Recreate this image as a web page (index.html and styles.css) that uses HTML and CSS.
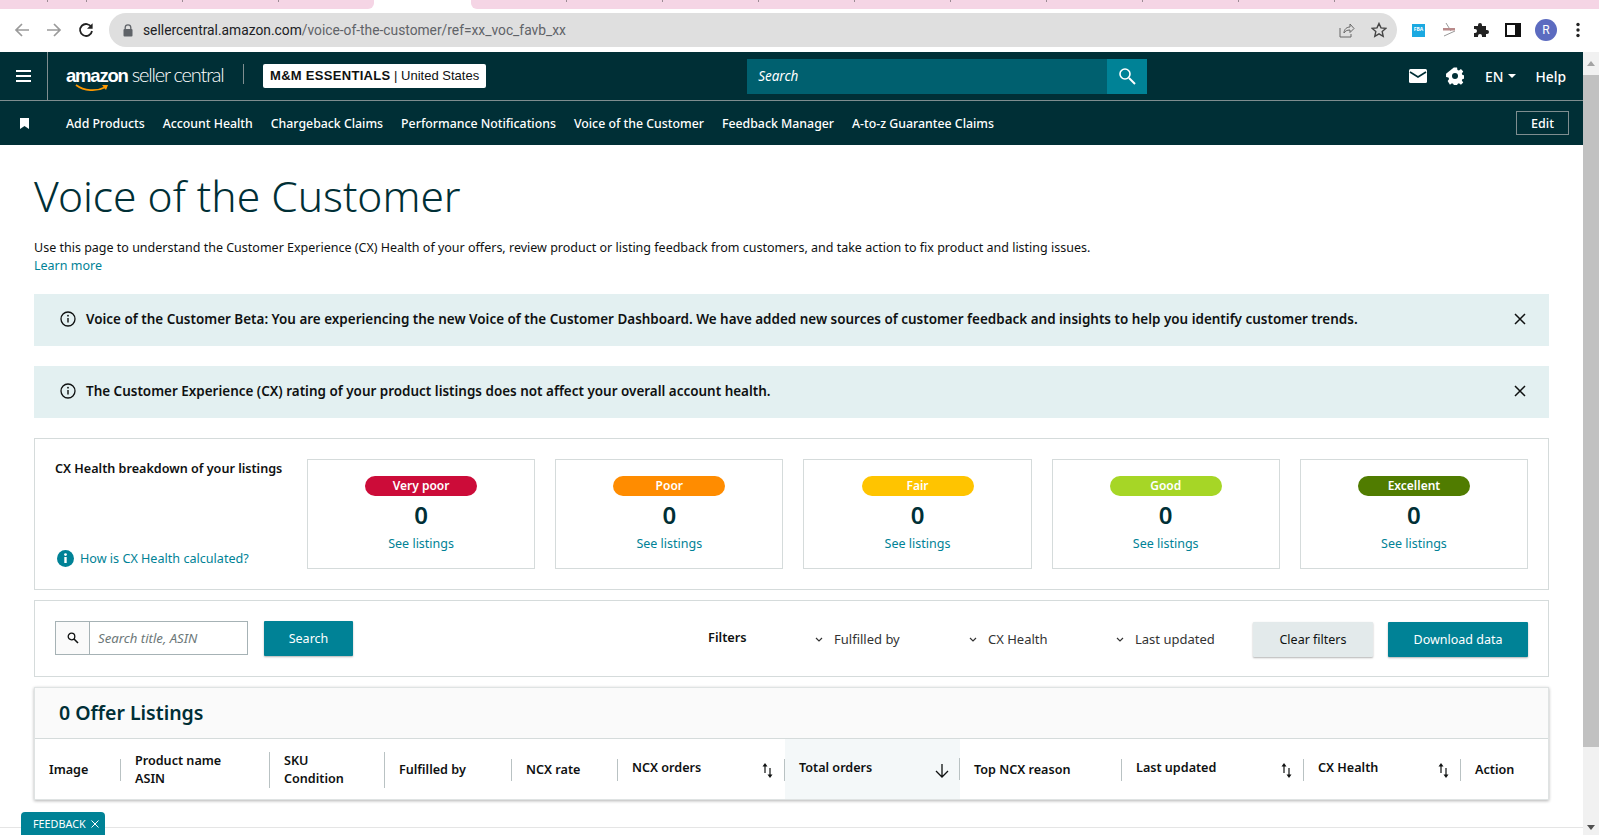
FILE: index.html
```html
<!DOCTYPE html>
<html lang="en">
<head>
    <meta charset="UTF-8">
    <title>Voice of the Customer</title>
    <link rel="stylesheet" href="styles.css">
</head>
<body>
    <div class="tabstrip">
        <div class="tabs tabs-left">
            <span class="tab t48"></span><span class="tab t39"></span><span class="tab t96"></span><span class="tab t96"></span><span class="tab-rest"></span>
        </div>
        <div class="tab-active"></div>
        <div class="tabs tabs-right">
            <span class="tab t96"></span><span class="tab t96"></span><span class="tab t96"></span><span class="tab t96"></span><span class="tab t96"></span><span class="tab t96"></span><span class="tab t96"></span><span class="tab t96"></span><span class="tab t96"></span><span class="tab-rest"></span>
        </div>
    </div>

    <div class="toolbar">
        <svg class="tool-icon" width="16" height="16" viewBox="0 0 16 16"><path d="M15 8H2M8 2 2 8l6 6" fill="none" stroke="#9a9a9a" stroke-width="1.7"/></svg>
        <svg class="tool-icon" width="16" height="16" viewBox="0 0 16 16"><path d="M1 8h13M8 2l6 6-6 6" fill="none" stroke="#9a9a9a" stroke-width="1.7"/></svg>
        <svg class="tool-icon" width="16" height="16" viewBox="0 0 16 16"><path d="M13.4 5.2A6 6 0 1 0 14 9" fill="none" stroke="#222" stroke-width="1.8"/><path d="M14.6 1.2v5.6H9z" fill="#222"/></svg>
        <div class="omnibox">
            <svg width="10" height="13" viewBox="0 0 10 13"><path d="M2.2 5.5V3.6a2.8 2.8 0 0 1 5.6 0v1.9" fill="none" stroke="#5f6368" stroke-width="1.3"/><rect x="0.5" y="5" width="9" height="7.5" rx="1" fill="#5f6368"/></svg>
            <div class="url"><span class="url-host">sellercentral.amazon.com</span>/voice-of-the-customer/ref=xx_voc_favb_xx</div>
            <svg class="omni-share" width="16" height="16" viewBox="0 0 16 16"><path d="M1 6v9h11v-3M5 11c0-4 3-6 6-6V2l4 4.500-4 4V8c-3 0-5 1-6 3z" fill="none" stroke="#666" stroke-width="1"/></svg>
            <svg class="omni-star" width="16" height="16" viewBox="0 0 16 16"><path d="m8 1.500 2 4.400 4.800.5-3.600 3.200 1 4.700L8 11.900l-4.200 2.400 1-4.700L1.200 6.400 6 5.900z" fill="none" stroke="#444" stroke-width="1.400"/></svg>
        </div>
        <div class="ext-icons">
            <span class="ext-fba">FBA</span>
            <svg width="16" height="16" viewBox="0 0 16 16"><path d="M5 1l5 8M3 14l11-5" stroke="#999" stroke-width="1" fill="none"/><rect x="2" y="6" width="12" height="2.500" fill="#b98a8a"/></svg>
            <svg width="16" height="16" viewBox="0 0 16 16"><path d="M1 4h4V3a2 2 0 0 1 4 0v1h4v4h1a2 2 0 0 1 0 4h-1v3H9v-1a2 2 0 0 0-4 0v1H1v-4h1a2 2 0 0 0 0-4H1z" fill="#222"/></svg>
            <svg width="16" height="14" viewBox="0 0 16 14"><path d="M1 1h14v12H1z" fill="#fff" stroke="#111" stroke-width="2"/><rect x="10" y="1" width="5" height="12" fill="#111"/></svg>
            <span class="avatar">R</span>
            <svg class="kebab" width="4" height="16" viewBox="0 0 4 16"><circle cx="2" cy="2.500" r="1.700" fill="#222"/><circle cx="2" cy="8" r="1.700" fill="#222"/><circle cx="2" cy="13.500" r="1.700" fill="#222"/></svg>
        </div>
    </div>

    <div class="viewport">
        <div class="page">
            <header class="masthead">
                <div class="top-row">
                    <div class="burger"><span></span><span></span><span></span></div>
                    <div class="logo">
                        <span class="logo-amazon">amazon</span><span class="logo-seller">seller central</span>
                        <svg class="logo-smile" width="34" height="8" viewBox="0 0 34 8"><path d="M1 1c8 6 20 7 30 2" fill="none" stroke="#f90" stroke-width="1.700"/><path d="m27 1 6 0-2 5z" fill="#f90"/></svg>
                    </div>
                    <div class="store-chip"><b>M&amp;M ESSENTIALS</b> | United States</div>
                    <div class="top-search">
                        <div class="top-search-input">Search</div>
                        <div class="top-search-btn">
                            <svg width="18" height="18" viewBox="0 0 18 18"><circle cx="7" cy="7" r="5" fill="none" stroke="#fff" stroke-width="1.600"/><path d="m11 11 6 6" stroke="#fff" stroke-width="2"/></svg>
                        </div>
                    </div>
                    <div class="top-right">
                        <svg width="18" height="14" viewBox="0 0 18 14"><rect width="18" height="14" rx="1.500" fill="#fff"/><path d="m1 3 8 5 8-5" fill="none" stroke="#002f36" stroke-width="1.600"/></svg>
                        <svg width="18" height="18" viewBox="0 0 18 18"><path d="M7.300 0h3.400l.4 2.500 1.600.7 2.100-1.500 2.400 2.400-1.500 2.100.7 1.600 2.500.4v3.400l-2.500.4-.7 1.600 1.500 2.100-2.400 2.400-2.100-1.500-1.600.7-.4 2.500H7.300l-.4-2.500-1.600-.7-2.100 1.500L.8 14.200l1.500-2.100-.7-1.600L-.900 10V6.600" fill="#fff" transform="translate(.900 .5) scale(.95)"/><circle cx="9" cy="9" r="3" fill="#002f36"/></svg>
                        <span class="lang">EN<i class="caret"></i></span>
                        <span class="help">Help</span>
                    </div>
                </div>
                <div class="nav-row">
                    <svg class="bookmark" width="9" height="11" viewBox="0 0 9 11"><path d="M0 0h9v11L4.500 8 0 11z" fill="#fff"/></svg>
                    <nav class="nav-links">
                        <a>Add Products</a><a>Account Health</a><a>Chargeback Claims</a><a>Performance Notifications</a><a>Voice of the Customer</a><a>Feedback Manager</a><a>A-to-z Guarantee Claims</a>
                    </nav>
                    <button class="edit-btn">Edit</button>
                </div>
            </header>

            <main class="content">
                <h1 class="page-title">Voice of the Customer</h1>
                <p class="intro">Use this page to understand the Customer Experience (CX) Health of your offers, review product or listing feedback from customers, and take action to fix product and listing issues.<br><a>Learn more</a></p>

                <div class="banner">
                    <svg width="16" height="16" viewBox="0 0 16 16"><circle cx="8" cy="8" r="7" fill="none" stroke="#0f1111" stroke-width="1.300"/><path d="M8 7v4.500" stroke="#0f1111" stroke-width="1.400"/><circle cx="8" cy="4.700" r=".9" fill="#0f1111"/></svg>
                    <span class="banner-text">Voice of the Customer Beta: You are experiencing the new Voice of the Customer Dashboard. We have added new sources of customer feedback and insights to help you identify customer trends.</span>
                    <svg width="12" height="12" viewBox="0 0 12 12"><path d="m1 1 10 10M11 1 1 11" stroke="#0f1111" stroke-width="1.500"/></svg>
                </div>
                <div class="banner">
                    <svg width="16" height="16" viewBox="0 0 16 16"><circle cx="8" cy="8" r="7" fill="none" stroke="#0f1111" stroke-width="1.300"/><path d="M8 7v4.500" stroke="#0f1111" stroke-width="1.400"/><circle cx="8" cy="4.700" r=".9" fill="#0f1111"/></svg>
                    <span class="banner-text">The Customer Experience (CX) rating of your product listings does not affect your overall account health.</span>
                    <svg width="12" height="12" viewBox="0 0 12 12"><path d="m1 1 10 10M11 1 1 11" stroke="#0f1111" stroke-width="1.500"/></svg>
                </div>

                <section class="panel health">
                    <div class="health-intro">
                        <div class="health-title">CX Health breakdown of your listings</div>
                        <a class="health-link">
                            <svg width="17" height="17" viewBox="0 0 17 17"><circle cx="8.500" cy="8.500" r="8.500" fill="#008296"/><rect x="7.300" y="7" width="2.400" height="6" fill="#fff"/><circle cx="8.500" cy="4.600" r="1.400" fill="#fff"/></svg>
                            How is CX Health calculated?
                        </a>
                    </div>
                    <div class="health-card"><span class="pill very-poor">Very poor</span><span class="count">0</span><a>See listings</a></div>
                    <div class="health-card"><span class="pill poor">Poor</span><span class="count">0</span><a>See listings</a></div>
                    <div class="health-card"><span class="pill fair">Fair</span><span class="count">0</span><a>See listings</a></div>
                    <div class="health-card"><span class="pill good">Good</span><span class="count">0</span><a>See listings</a></div>
                    <div class="health-card"><span class="pill excellent">Excellent</span><span class="count">0</span><a>See listings</a></div>
                </section>

                <section class="panel filters">
                    <div class="search-box">
                        <span class="search-addon"><svg width="12" height="12" viewBox="0 0 12 12"><circle cx="4.500" cy="4.500" r="3.300" fill="none" stroke="#0f1111" stroke-width="1.300"/><path d="m7 7 4 4" stroke="#0f1111" stroke-width="1.600"/></svg></span>
                        <span class="search-placeholder">Search title, ASIN</span>
                    </div>
                    <button class="btn btn-primary search-btn">Search</button>
                    <span class="filters-label">Filters</span>
                    <span class="filter f-fulfilled"><svg width="8" height="5" viewBox="0 0 8 5"><path d="m1 1 3 3 3-3" fill="none" stroke="#333" stroke-width="1.200"/></svg>Fulfilled by</span>
                    <span class="filter f-health"><svg width="8" height="5" viewBox="0 0 8 5"><path d="m1 1 3 3 3-3" fill="none" stroke="#333" stroke-width="1.200"/></svg>CX Health</span>
                    <span class="filter f-updated"><svg width="8" height="5" viewBox="0 0 8 5"><path d="m1 1 3 3 3-3" fill="none" stroke="#333" stroke-width="1.200"/></svg>Last updated</span>
                    <button class="btn btn-light clear-btn">Clear filters</button>
                    <button class="btn btn-primary download-btn">Download data</button>
                </section>

                <section class="listings">
                    <h2 class="listings-title">0 Offer Listings</h2>
                    <div class="listings-head">
                        <div class="col short">Image</div>
                        <div class="col tall">Product name<br>ASIN</div>
                        <div class="col tall">SKU<br>Condition</div>
                        <div class="col short">Fulfilled by</div>
                        <div class="col short">NCX rate</div>
                        <div class="col short sortable raised">NCX orders<svg class="sort" width="11" height="15" viewBox="0 0 11 15"><path d="M3 10V3" stroke="#0f1111" stroke-width="1.200"/><path d="M3 0l2.500 3.500h-5z" fill="#0f1111"/><path d="M8 5v7" stroke="#0f1111" stroke-width="1.200"/><path d="M8 15l-2.500-3.500h5z" fill="#0f1111"/></svg></div>
                        <div class="col short sortable raised sorted">Total orders<svg class="sort" width="14" height="15" viewBox="0 0 14 15"><path d="M7 1v13M1 8l6 6 6-6" fill="none" stroke="#0f1111" stroke-width="1.300"/></svg></div>
                        <div class="col short">Top NCX reason</div>
                        <div class="col short sortable raised">Last updated<svg class="sort" width="11" height="15" viewBox="0 0 11 15"><path d="M3 10V3" stroke="#0f1111" stroke-width="1.200"/><path d="M3 0l2.500 3.500h-5z" fill="#0f1111"/><path d="M8 5v7" stroke="#0f1111" stroke-width="1.200"/><path d="M8 15l-2.500-3.500h5z" fill="#0f1111"/></svg></div>
                        <div class="col short sortable raised">CX Health<svg class="sort" width="11" height="15" viewBox="0 0 11 15"><path d="M3 10V3" stroke="#0f1111" stroke-width="1.200"/><path d="M3 0l2.500 3.500h-5z" fill="#0f1111"/><path d="M8 5v7" stroke="#0f1111" stroke-width="1.200"/><path d="M8 15l-2.500-3.500h5z" fill="#0f1111"/></svg></div>
                        <div class="col short">Action</div>
                    </div>
                </section>
            </main>
            <div class="footer-line"></div>
            <div class="feedback-tab">FEEDBACK <svg width="8" height="8" viewBox="0 0 8 8"><path d="m.5.5 7 7m0-7-7 7" stroke="#fff" stroke-width="1"/></svg></div>
        </div>
        <div class="scrollbar">
            <span class="arrow-up"></span>
            <span class="thumb"></span>
            <span class="arrow-down"></span>
        </div>
    </div>
</body>
</html>
```

FILE: styles.css
```css
* {
    margin: 0;
    padding: 0;
    box-sizing: border-box;
}

body {
    width: 1599px;
    height: 835px;
    overflow: hidden;
    background: #fff;
    color: #0f1111;
    font-family: 'Noto Sans', sans-serif;
    font-size: 12.500px;
}

/* browser chrome */
.tabstrip {
    display: flex;
    height: 9px;
    background: #fff;
}

.tabs {
    display: flex;
    background: #f5d5e5;
}

.tabs-left {
    width: 374px;
    border-bottom-right-radius: 6px;
}

.tabs-right {
    flex: 1;
    border-bottom-left-radius: 6px;
}

.tab {
    height: 2px;
    border-right: 1px solid #9c8b94;
}

.t48 { width: 48px; }
.t39 { width: 39px; }
.t96 { width: 96px; }

.tab-active {
    width: 97px;
    background: #fff;
}

.toolbar {
    display: flex;
    align-items: center;
    height: 43px;
    padding: 0 0 1px 14px;
    gap: 16px;
    background: #fff;
}

.omnibox {
    display: flex;
    align-items: center;
    width: 1288px;
    height: 34px;
    margin-left: -1px;
    padding: 0 10px 0 14px;
    border-radius: 17px;
    background: #dfdfdf;
}

.url {
    flex: 1;
    margin-left: 10px;
    color: #5f6368;
    font-family: 'Roboto', sans-serif;
    font-size: 13.800px;
}

.url-host {
    color: #202124;
}

.omni-star {
    margin-left: 16px;
}

.ext-icons {
    display: flex;
    align-items: center;
    gap: 16px;
    margin-left: -1px;
}

.ext-fba {
    width: 13px;
    height: 13px;
    background: #1ba9e1;
    color: #fff;
    font-size: 5px;
    font-weight: 700;
    line-height: 11px;
    text-align: center;
}

.avatar {
    width: 22px;
    height: 22px;
    margin-left: -2px;
    border-radius: 50%;
    background: #5c6bc0;
    color: #fff;
    font-family: 'Roboto', sans-serif;
    font-size: 12px;
    line-height: 22px;
    text-align: center;
}

.kebab {
    margin-left: 3px;
}

.viewport {
    display: flex;
    height: 783px;
}

.page {
    position: relative;
    flex: 1;
    min-width: 0;
}

.scrollbar {
    display: flex;
    flex-direction: column;
    width: 16px;
    background: #f1f1f1;
    align-items: center;
}

.arrow-up {
    margin: 9px 0 9px;
    border: 4px solid transparent;
    border-top: 0;
    border-bottom: 5px solid #a3a3a3;
}

.thumb {
    width: 100%;
    height: 672px;
    background: #c1c1c1;
}

.arrow-down {
    margin-top: auto;
    margin-bottom: 5px;
    border: 4px solid transparent;
    border-bottom: 0;
    border-top: 5px solid #505050;
}

/* seller central header */
.masthead {
    background: #002f36;
    color: #fff;
}

.top-row {
    display: flex;
    align-items: center;
    height: 49px;
    border-bottom: 1px solid #7f8e90;
}

.burger {
    display: flex;
    flex-direction: column;
    justify-content: center;
    gap: 3px;
    width: 48px;
    height: 48px;
    padding: 0 16px;
    border-right: 1px solid #7f8e90;
}

.burger span {
    height: 2px;
    background: #fff;
}

.logo {
    position: relative;
    display: flex;
    align-items: baseline;
    width: 178px;
    height: 20px;
    margin-left: 18px;
    margin-top: -4px;
    border-right: 1px solid #7f8e90;
    line-height: 20px;
}

.logo-amazon {
    font-family: 'Liberation Sans', sans-serif;
    font-size: 18.500px;
    font-weight: 700;
    letter-spacing: -1.200px;
}

.logo-seller {
    margin-left: 4px;
    font-family: 'Lato', sans-serif;
    font-size: 20px;
    font-weight: 300;
    letter-spacing: -1.200px;
}

.logo-smile {
    position: absolute;
    left: 9px;
    top: 20px;
}

.store-chip {
    height: 24px;
    margin-left: 19px;
    padding: 0 7px;
    border-radius: 2px;
    background: #fff;
    color: #0f1111;
    font-family: 'Liberation Sans', sans-serif;
    font-size: 13px;
    line-height: 24px;
    white-space: nowrap;
}

.store-chip b {
    letter-spacing: 0.300px;
}

.top-search {
    display: flex;
    width: 400px;
    height: 35px;
    margin-left: 261px;
}

.top-search-input {
    flex: 1;
    padding: 0 11px;
    background: #00606f;
    color: #fff;
    font-size: 13.500px;
    font-style: italic;
    line-height: 35px;
}

.top-search-btn {
    display: flex;
    align-items: center;
    justify-content: center;
    width: 40px;
    background: #008296;
}

.top-right {
    display: flex;
    align-items: center;
    gap: 19px;
    margin-left: auto;
    padding-right: 17px;
}

.lang,
.help {
    font-size: 13.800px;
    font-weight: 500;
}

.lang {
    display: flex;
    align-items: center;
    gap: 5px;
    margin-left: 2px;
}

.caret {
    border: 4px solid transparent;
    border-top: 4px solid #fff;
    border-bottom: 0;
}

.nav-row {
    display: flex;
    align-items: center;
    height: 44px;
    padding-left: 20px;
}

.nav-links {
    display: flex;
    gap: 18px;
    margin-left: 37px;
}

.nav-links a {
    font-size: 12.320px;
    font-weight: 500;
    white-space: nowrap;
}

.edit-btn {
    width: 53px;
    height: 24px;
    margin-left: auto;
    margin-right: 14px;
    border: 1px solid #7f8e90;
    background: transparent;
    color: #fff;
    font-family: inherit;
    font-size: 12.500px;
    font-weight: 500;
}

/* page body */
.content {
    padding: 25px 34px 0;
}

.page-title {
    color: #002f36;
    font-size: 42.500px;
    font-weight: 300;
    line-height: 52px;
}

.intro {
    margin-top: 17px;
    margin-bottom: 19px;
    line-height: 18px;
}

.intro a,
.health-card a,
.health-link {
    color: #008296;
}

.banner {
    display: flex;
    align-items: center;
    gap: 10px;
    height: 52px;
    margin-bottom: 20px;
    padding: 0 23px 2px 26px;
    background: #e3f0f1;
}

.banner-text {
    flex: 1;
    font-size: 13.460px;
    font-weight: 600;
}

.panel {
    border: 1px solid #d5dbdb;
}

.health {
    display: flex;
    gap: 20px;
    height: 152px;
    padding: 20px;
}

.health-intro {
    display: flex;
    flex-direction: column;
    justify-content: space-between;
    width: 232px;
    padding: 1px 0 2px;
}

.health-title {
    font-size: 12.600px;
    font-weight: 600;
    white-space: nowrap;
}

.health-link {
    display: flex;
    align-items: center;
    gap: 6px;
    margin-left: 2px;
    font-size: 12.600px;
    white-space: nowrap;
}

.health-card {
    display: flex;
    flex: 1;
    flex-direction: column;
    align-items: center;
    padding-top: 16px;
    border: 1px solid #d5dbdb;
}

.pill {
    width: 112px;
    height: 20px;
    border-radius: 10px;
    color: #fff;
    font-size: 12px;
    font-weight: 600;
    line-height: 20px;
    text-align: center;
}

.very-poor { background: #cc0c39; }
.poor { background: #ff8c00; }
.fair { background: #ffc400; }
.good { background: #a6d626; }
.excellent { background: #507c00; }

.count {
    margin-top: 1px;
    color: #002f36;
    font-size: 24px;
    font-weight: 600;
    line-height: 36px;
}

.health-card a {
    margin-top: 2px;
}

.filters {
    display: flex;
    align-items: center;
    height: 77px;
    margin-top: 10px;
    padding: 0 20px;
}

.search-box {
    display: flex;
    width: 193px;
    height: 34px;
    margin-top: -1px;
    border: 1px solid #a6b2b5;
}

.search-addon {
    display: flex;
    align-items: center;
    justify-content: center;
    width: 34px;
    border-right: 1px solid #a6b2b5;
    background: #fafafa;
}

.search-placeholder {
    padding-left: 8px;
    color: #6c7778;
    font-size: 13.200px;
    font-style: italic;
    line-height: 33px;
}

.btn {
    height: 35px;
    border: 0;
    border-radius: 1px;
    font-family: inherit;
    font-size: 12.500px;
    box-shadow: 0 1px 2px rgba(0, 0, 0, 0.3);
}

.btn-primary {
    background: #008296;
    color: #fff;
}

.btn-light {
    background: #e3eaeb;
    color: #0f1111;
}

.search-btn {
    width: 89px;
    margin-left: 16px;
}

.filters-label {
    width: 107px;
    margin-top: -3px;
    margin-left: 355px;
    font-size: 12.800px;
    font-weight: 600;
}

.filter {
    display: flex;
    align-items: center;
    gap: 11px;
    margin-top: 1px;
    color: #333;
    font-size: 13px;
}

.f-fulfilled { width: 154px; }
.f-health { width: 147px; }
.f-updated { width: 137px; }

.clear-btn {
    width: 120px;
    margin-top: 2px;
}

.download-btn {
    width: 140px;
    margin-top: 2px;
    margin-left: 15px;
}

.listings {
    margin-top: 10px;
    border: 1px solid #dfe3e3;
    box-shadow: 0 1px 3px rgba(0, 0, 0, 0.3);
}

.listings-title {
    height: 51px;
    padding-left: 24px;
    border-bottom: 1px solid #d5dbdb;
    background: #fafafa;
    color: #002f36;
    font-size: 19.500px;
    font-weight: 600;
    line-height: 50px;
}

.listings-head {
    display: grid;
    grid-template-columns: 86px 149px 115px 127px 106px 167px 175px 162px 182px 157px 1fr;
    height: 60px;
    padding-top: 2px;
    align-items: center;
}

.col {
    display: flex;
    align-items: center;
    padding-left: 14px;
    padding-right: 11px;
    font-size: 12.600px;
    font-weight: 600;
    line-height: 18px;
    border-right: 1px solid #b9c2c3;
    white-space: nowrap;
}

.col:last-child {
    border-right: 0;
}

.short {
    height: 22px;
}

.tall {
    display: block;
    height: 36px;
}

.raised {
    padding-bottom: 4px;
}

.sortable {
    justify-content: space-between;
}

.sorted {
    position: relative;
    height: 60px;
    margin-top: -2px;
    padding-top: 2px;
    border-right: 0;
    background: #f4f8f9;
}

/* the sorted cell fills the row, so its separator is drawn on top */
.sorted::after {
    content: "";
    position: absolute;
    top: 19px;
    right: 0;
    width: 1px;
    height: 22px;
    background: #b9c2c3;
}

.sort {
    flex: none;
    margin-top: 4px;
}

.footer-line {
    height: 1px;
    margin-top: 27px;
    background: #e5e5e5;
}

.feedback-tab {
    position: absolute;
    left: 21px;
    bottom: 0;
    display: flex;
    align-items: center;
    gap: 5px;
    height: 23px;
    padding: 0 6px 0 12px;
    border-radius: 4px 4px 0 0;
    background: #008296;
    color: #fff;
    font-size: 10.800px;
}
```
